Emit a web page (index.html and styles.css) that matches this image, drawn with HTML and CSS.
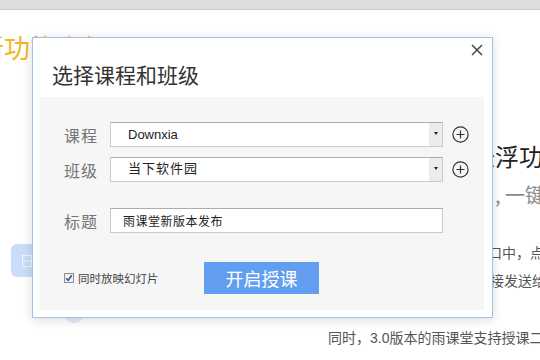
FILE: index.html
```html
<!DOCTYPE html>
<html lang="zh-CN">
<head>
<meta charset="UTF-8" />
<title>雨课堂 - 选择课程和班级</title>
<link rel="stylesheet" href="styles.css">
</head>
<body>

<div class="topbar"></div>

<!-- 背景页面 -->
<main class="page">
  <h2 class="feature-title">新功能介绍</h2>
  <div class="feature">
    <div class="feature-side">
      <div class="side-tab">
        <svg width="10" height="12" viewBox="0 0 10 12"><rect x="0.5" y="0.5" width="9" height="11" fill="none" stroke="#fff" stroke-opacity="0.7"/><line x1="0.5" y1="6" x2="9.5" y2="6" stroke="#fff" stroke-opacity="0.7"/></svg>
      </div>
      <div class="side-dot"></div>
    </div>
    <div class="feature-text">
      <h3>悬浮功能</h3>
      <p class="lead">, 一键开启</p>
      <p class="line-a">窗口中，点击</p>
      <p class="line-b">直接发送给学生</p>
    </div>
  </div>
  <p class="foot">同时，3.0版本的雨课堂支持授课二维码</p>
</main>

<!-- 选择课程弹窗 -->
<div class="dialog">
  <div class="dialog-header">
    <div class="dialog-title">选择课程和班级</div>
    <button class="close-btn">
      <svg width="12" height="12" viewBox="0 0 12 12"><path d="M1 1 L11 11 M11 1 L1 11" stroke="#444" stroke-width="1.5" fill="none"/></svg>
    </button>
  </div>
  <div class="dialog-body">
    <div class="form-row">
      <label class="row-label">课程</label>
      <div class="select-box"><span class="latin">Downxia</span><span class="drop"></span></div>
      <svg class="add-btn" width="17" height="17" viewBox="0 0 17 17"><circle cx="8.5" cy="8.5" r="7.6" fill="none" stroke="#333" stroke-width="1.2"/><path d="M4.5 8.5 H12.5 M8.5 4.5 V12.5" stroke="#333" stroke-width="1.2"/></svg>
    </div>
    <div class="form-row row-class">
      <label class="row-label">班级</label>
      <div class="select-box"><span class="cls">当下软件园</span><span class="drop"></span></div>
      <svg class="add-btn" width="17" height="17" viewBox="0 0 17 17"><circle cx="8.5" cy="8.5" r="7.6" fill="none" stroke="#333" stroke-width="1.2"/><path d="M4.5 8.5 H12.5 M8.5 4.5 V12.5" stroke="#333" stroke-width="1.2"/></svg>
    </div>
    <div class="form-row row-title">
      <label class="row-label">标题</label>
      <div class="text-box">雨课堂新版本发布</div>
    </div>
    <div class="action-row">
      <label class="check">
        <span class="check-box">
          <svg width="8" height="8" viewBox="0 0 8 8"><path d="M1.2 4.2 L3.2 6.4 L6.8 1.2" stroke="#2a4fa8" stroke-width="1.5" fill="none"/></svg>
        </span>
        同时放映幻灯片
      </label>
      <button class="start-btn">开启授课</button>
    </div>
  </div>
</div>

</body>
</html>
```

FILE: styles.css
```css
body { margin: 0; font-family: "Noto Sans CJK SC", "Liberation Sans", sans-serif; background: #fff; color: #333; overflow: hidden; width: 540px; height: 360px; position: relative; }
.topbar { height: 9px; background: #dedede; border-bottom: 1px solid #cfcfcf; }

/* 背景页面 */
.page { width: 540px; }
.feature-title { margin: 22px 0 0 -22px; font-size: 26px; line-height: 30px; font-weight: normal; color: #f3b51d; white-space: nowrap; }
.feature { display: grid; grid-template-columns: 471px 1fr; height: 232px; }
.feature-side { padding-left: 11px; }
.side-tab { margin-top: 182px; width: 60px; height: 33px; border-radius: 6px; background: #cadcf7; display: flex; align-items: center; padding-left: 11px; box-sizing: border-box; }
.side-dot { margin: 24px 0 0 52px; width: 22px; height: 22px; border-radius: 50%; background: #e4edfa; }
.feature-text { padding-top: 79px; white-space: nowrap; }
.feature-text h3 { margin: 0; font-size: 24px; line-height: 30px; font-weight: normal; color: #222; }
.feature-text p { margin: 0; }
.feature-text .lead { margin-top: 9px; padding-left: 24px; font-size: 20px; line-height: 30px; color: #8a8a8a; }
.feature-text .line-a { margin-top: 28px; padding-left: 3px; font-size: 14px; line-height: 28px; color: #555; }
.feature-text .line-b { padding-left: 5px; font-size: 14px; line-height: 28px; color: #555; }
.foot { margin: 30px 0 0 328px; font-size: 14px; line-height: 28px; color: #555; white-space: nowrap; font-family: "Liberation Sans", "Noto Sans CJK SC", sans-serif; }

/* 弹窗 */
.dialog { position: absolute; left: 32px; top: 37px; width: 461px; height: 281px; box-sizing: border-box; background: #fff; border: 1px solid #a5c0e8; box-shadow: 0 2px 10px rgba(0,0,0,0.14); padding: 0 8px 7px 7px; }
.dialog-header { height: 59px; display: flex; justify-content: space-between; align-items: flex-start; padding: 6px 1px 0 12px; box-sizing: border-box; }
.dialog-title { margin-top: 19px; font-size: 21px; line-height: 22px; color: #333; }
.close-btn { border: none; background: none; padding: 0; width: 12px; height: 12px; display: block; cursor: pointer; }
.close-btn svg { display: block; }
.dialog-body { background: #f6f6f6; height: 213px; padding: 25px 0 0 24px; box-sizing: border-box; }
.form-row { display: flex; align-items: center; height: 25px; }
.row-class { margin-top: 10px; }
.row-title { margin-top: 26px; }
.row-label { width: 46px; font-size: 16px; color: #757575; letter-spacing: 1px; }
.select-box, .text-box { width: 333px; height: 25px; box-sizing: border-box; background: #fff; border: 1px solid #cacaca; border-top-color: #adadad; display: flex; align-items: center; position: relative; color: #222; }
.select-box .latin { padding-left: 17px; font-family: "Liberation Sans", sans-serif; font-size: 13px; }
.select-box .cls { padding-left: 17px; font-size: 13px; letter-spacing: 1px; margin-top: -4px; }
.drop { margin-left: auto; width: 13px; height: 23px; background: #ececec; display: flex; align-items: center; justify-content: center; }
.drop::after { content: ""; border-left: 2px solid transparent; border-right: 2px solid transparent; border-top: 3px solid #222; margin-top: -2px; }
.text-box { padding-left: 12px; font-size: 12px; letter-spacing: 0.5px; }
.add-btn { margin-left: 9px; display: block; }
.action-row { display: flex; align-items: center; margin-top: 29px; height: 32px; }
.check { display: flex; align-items: center; font-size: 11.5px; color: #444; width: 140px; }
.check-box { width: 10px; height: 10px; box-sizing: border-box; border: 1px solid #8d8d8d; background: #f0f0f0; margin-right: 4px; display: flex; align-items: center; justify-content: center; }
.check-box svg { display: block; }
.start-btn { width: 115px; height: 32px; border: none; background: #619ef0; color: #fff; font-family: "Noto Sans CJK SC", sans-serif; font-size: 18px; padding: 0; cursor: pointer; }
```
